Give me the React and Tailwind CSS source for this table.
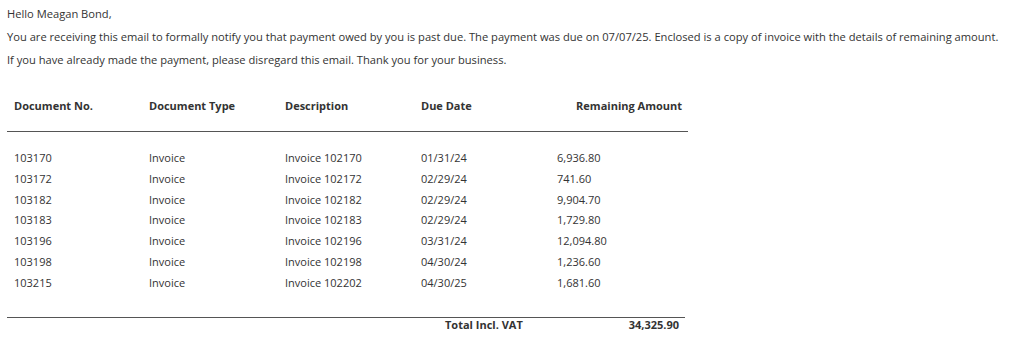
const rows = [
    {no: "103170", type: "Invoice", desc: "Invoice 102170", due: "01/31/24", amount: "6,936.80"},
    {no: "103172", type: "Invoice", desc: "Invoice 102172", due: "02/29/24", amount: "741.60"},
    {no: "103182", type: "Invoice", desc: "Invoice 102182", due: "02/29/24", amount: "9,904.70"},
    {no: "103183", type: "Invoice", desc: "Invoice 102183", due: "02/29/24", amount: "1,729.80"},
    {no: "103196", type: "Invoice", desc: "Invoice 102196", due: "03/31/24", amount: "12,094.80"},
    {no: "103198", type: "Invoice", desc: "Invoice 102198", due: "04/30/24", amount: "1,236.60"},
    {no: "103215", type: "Invoice", desc: "Invoice 102202", due: "04/30/25", amount: "1,681.60"},
];

const cols = "grid grid-cols-[142px_136px_136px_135px_1fr]";

function App() {
    return (
        <div className="min-h-screen w-full bg-white text-[#333] font-['Open_Sans',sans-serif]">
            <div className="pl-[7px] pt-[5px] text-[11.15px] whitespace-nowrap">
                <p className="leading-[18px]">Hello Meagan Bond,</p>
                <p className="leading-[18px] mt-[5px]">
                    You are receiving this email to formally notify you that payment owed by you is past due. The payment was due on 07/07/25. Enclosed is a copy of invoice with the details of remaining amount.
                </p>
                <p className="leading-[18px] mt-[5px]">
                    If you have already made the payment, please disregard this email. Thank you for your business.
                </p>
            </div>

            <div className="ml-[7px] w-[681px] mt-[28px] text-[11px]">
                <div className={`${cols} font-bold leading-[18px] pb-[16px] border-b border-[#555]`}>
                    <div className="pl-[7px]">Document No.</div>
                    <div>Document Type</div>
                    <div>Description</div>
                    <div>Due Date</div>
                    <div className="text-right pr-[6px]">Remaining Amount</div>
                </div>

                <div className="pt-[16px] pb-[23px] border-b border-[#555] w-[678px]">
                    {rows.map((r) => (
                        <div key={r.no} className={`${cols} leading-[20.8px]`}>
                            <div className="pl-[7px]">{r.no}</div>
                            <div>{r.type}</div>
                            <div>{r.desc}</div>
                            <div>{r.due}</div>
                            <div className="pl-[1px]">{r.amount}</div>
                        </div>
                    ))}
                </div>

                <div className={`${cols} font-bold leading-[14px]`}>
                    <div></div>
                    <div></div>
                    <div></div>
                    <div className="pl-[24px] whitespace-nowrap">Total Incl. VAT</div>
                    <div className="text-right pr-[9px]">34,325.90</div>
                </div>
            </div>
        </div>
    )
}

export default App
